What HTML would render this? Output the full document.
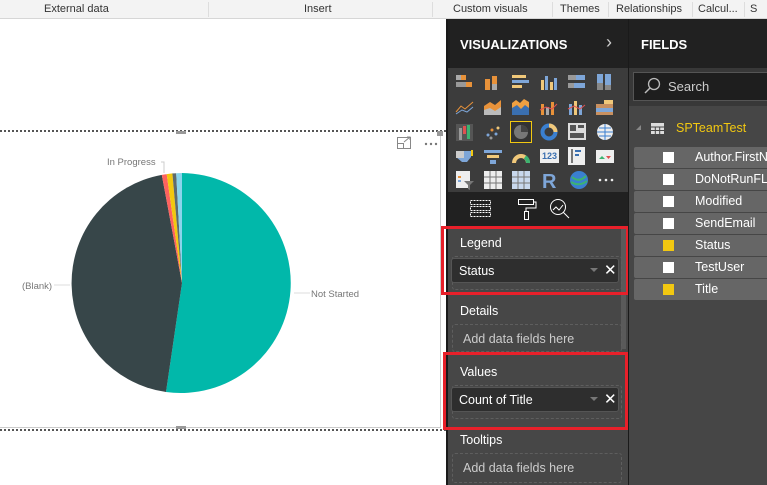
<!DOCTYPE html>
<html><head><meta charset="utf-8"><style>
*{margin:0;padding:0;box-sizing:border-box}
body{width:767px;height:485px;overflow:hidden;position:relative;background:#fff;font-family:"Liberation Sans",sans-serif}
.abs{position:absolute}
.top{left:0;top:0;width:767px;height:19px;background:#f3f3f3;border-bottom:1px solid #d6d6d6;font-size:11px;color:#333}
.top span{position:absolute;top:3px}
.top i{position:absolute;top:2px;width:1px;height:15px;background:#ddd}
.viz{left:446px;top:19px;width:182px;height:466px;background:#474747;border-left:2px solid #1a1a1a}
.fld{left:628px;top:19px;width:139px;height:466px;background:#464646;border-left:1px solid #1a1a1a}
.hdr{color:#fff;font-weight:bold;font-size:13px;letter-spacing:0}
.row{position:absolute;left:5px;width:140px;height:21px;background:#666;border-radius:2px;color:#fff;font-size:12.5px}
.row b{position:absolute;left:29px;top:5px;width:11px;height:11px;background:#fff}
.row b.y{background:#f2c811}
.row span{position:absolute;left:61px;top:3px;font-weight:normal}
.lbl{color:#fff;font-size:12.5px;position:absolute;left:12px}
.well{position:absolute;left:4px;width:170px;height:28px;border:1px dashed #5e5e5e;border-radius:3px;color:#ccc;font-size:12.5px}
.pill{position:absolute;left:3px;width:168px;height:25px;background:#2e2e2e;border:1px solid #555;border-radius:3px;color:#fff;font-size:12.5px}
.red{position:absolute;border:3px solid #e8202a}
</style></head><body>
<div class="abs top">
<span style="left:44px">External data</span><i style="left:208px"></i>
<span style="left:304px">Insert</span><i style="left:432px"></i>
<span style="left:453px">Custom visuals</span><i style="left:552px"></i>
<span style="left:560px">Themes</span><i style="left:608px"></i>
<span style="left:616px">Relationships</span><i style="left:692px"></i>
<span style="left:698px">Calcul...</span><i style="left:744px"></i>
<span style="left:750px">S</span>
</div>

<!-- canvas -->
<div class="abs" style="left:0;top:130px;width:446px;border-top:2px dotted #555"></div>
<div class="abs" style="left:0;top:429px;width:446px;border-top:2px dotted #555"></div>
<div class="abs" style="left:0;top:427px;width:440px;border-top:1px solid #ccc"></div>
<div class="abs" style="left:440px;top:133px;width:1px;height:295px;background:#ccc"></div>
<div class="abs" style="left:176px;top:131px;width:10px;height:3px;background:#999"></div>
<div class="abs" style="left:176px;top:426px;width:10px;height:3px;background:#999"></div>
<div class="abs" style="left:437px;top:131px;width:6px;height:5px;background:#999"></div>
<svg class="abs" style="left:0;top:120px" width="446" height="320">
<rect x="397.5" y="17.5" width="13" height="11" fill="none" stroke="#888"/>
<rect x="397.5" y="23.5" width="6" height="5" fill="none" stroke="#888"/>
<path d="M404 22 L410 17 M407 17 H410 V20" stroke="#888" fill="none"/>
<circle cx="426" cy="24" r="1.2" fill="#777"/><circle cx="431" cy="24" r="1.2" fill="#777"/><circle cx="436" cy="24" r="1.2" fill="#777"/>
<g transform="translate(182,163)">
<path d="M0 0 L0 -110 A110 110 0 1 1 -16 109 Z" fill="#01b8aa"/>
<path d="M0 0 L-16 109 A110 110 0 0 1 -20.2 -108.1 Z" fill="#374649"/>
<path d="M0 0 L-20.2 -108.1 A110 110 0 0 1 -15.3 -108.9 Z" fill="#fd625e"/>
<path d="M0 0 L-15.3 -108.9 A110 110 0 0 1 -9.6 -109.6 Z" fill="#f2c80f"/>
<path d="M0 0 L-9.6 -109.6 A110 110 0 0 1 -5.8 -109.8 Z" fill="#5f6b6d"/>
<path d="M0 0 L-5.8 -109.8 A110 110 0 0 1 0 -110 Z" fill="#8ad4eb"/>
</g>
<path d="M161 42 H164 V53" stroke="#ccc" fill="none"/>
<path d="M54 165 H70" stroke="#ddd"/>
<path d="M294 173 H310" stroke="#ddd"/>
<text x="107" y="45" font-size="9.5" fill="#777" font-family="Liberation Sans">In Progress</text>
<text x="22" y="169" font-size="9.5" fill="#777" font-family="Liberation Sans">(Blank)</text>
<text x="311" y="177" font-size="9.5" fill="#777" font-family="Liberation Sans">Not Started</text>
</svg>

<!-- viz pane -->
<div class="abs viz">
<div class="abs" style="left:0;top:0;width:180px;height:49px;background:#212121"></div>
<div class="abs hdr" style="left:12px;top:18px">VISUALIZATIONS</div>
<div class="abs" style="left:158px;top:13px;color:#ccc;font-size:18px">›</div>
<div class="abs" style="left:0;top:49px;width:180px;height:124px;background:#3c3c3c"></div>
<svg class="abs" style="left:0;top:49px" width="180" height="124">
<g id="r1">
<g transform="translate(8,5)"><rect x="0" y="2" width="10" height="5" fill="#e8923a"/><rect x="0" y="9" width="16" height="5" fill="#999"/><rect x="10" y="9" width="6" height="5" fill="#e8923a"/><rect x="0" y="2" width="5" height="5" fill="#aaa"/></g>
<g transform="translate(36,5)"><rect x="1" y="6" width="5" height="11" fill="#e8923a"/><rect x="8" y="3" width="5" height="14" fill="#e8923a"/><rect x="8" y="11" width="5" height="6" fill="#aaa"/></g>
<g transform="translate(64,5)"><rect x="0" y="2" width="14" height="3" fill="#f0c87a"/><rect x="0" y="7" width="17" height="3" fill="#7ea6d8"/><rect x="0" y="12" width="10" height="3" fill="#f0c87a"/></g>
<g transform="translate(92,5)"><rect x="1" y="7" width="3" height="10" fill="#f0c87a"/><rect x="5" y="3" width="3" height="14" fill="#7ea6d8"/><rect x="10" y="9" width="3" height="8" fill="#f0c87a"/><rect x="14" y="5" width="3" height="12" fill="#7ea6d8"/></g>
<g transform="translate(120,5)"><rect x="0" y="2" width="17" height="5" fill="#7ea6d8"/><rect x="0" y="2" width="8" height="5" fill="#999"/><rect x="0" y="10" width="17" height="5" fill="#7ea6d8"/><rect x="0" y="10" width="6" height="5" fill="#999"/></g>
<g transform="translate(148,5)"><rect x="1" y="1" width="6" height="16" fill="#7ea6d8"/><rect x="9" y="1" width="6" height="16" fill="#7ea6d8"/><rect x="1" y="10" width="6" height="7" fill="#888"/><rect x="9" y="12" width="6" height="5" fill="#888"/></g>
</g>
<g transform="translate(0,25)">
<g transform="translate(8,5)"><path d="M0 14 L5 8 L9 11 L17 4" stroke="#e8923a" fill="none"/><path d="M0 16 L6 12 L11 14 L17 9" stroke="#7ea6d8" fill="none"/></g>
<g transform="translate(36,5)"><path d="M0 17 V8 L6 4 L11 7 L17 2 V17Z" fill="#e8923a"/><path d="M0 17 V12 L6 10 L11 13 L17 9 V17Z" fill="#bbb"/></g>
<g transform="translate(64,5)"><path d="M0 17 V5 L4 2 L8 5 L12 1 L17 4 V17Z" fill="#f0a040"/><path d="M0 17 V10 L5 7 L9 11 L13 7 L17 10 V17Z" fill="#3a6fb0"/></g>
<g transform="translate(92,5)"><rect x="1" y="6" width="3" height="11" fill="#e8923a"/><rect x="6" y="9" width="3" height="8" fill="#aaa"/><rect x="11" y="4" width="3" height="13" fill="#e8923a"/><path d="M0 12 L6 9 L12 11 L17 6" stroke="#e05050" fill="none"/></g>
<g transform="translate(120,5)"><rect x="1" y="6" width="3" height="11" fill="#7ea6d8"/><rect x="6" y="3" width="3" height="14" fill="#f0c87a"/><rect x="11" y="7" width="3" height="10" fill="#7ea6d8"/><path d="M0 11 L6 8 L12 11 L17 7" stroke="#e05050" fill="none"/></g>
<g transform="translate(148,5)"><rect x="0" y="6" width="17" height="11" fill="#c89060"/><rect x="0" y="10" width="17" height="4" fill="#7ea6d8"/><rect x="8" y="2" width="9" height="4" fill="#f0c87a"/></g>
</g>
<g transform="translate(0,50)">
<g transform="translate(8,5)"><rect x="0" y="1" width="17" height="17" fill="#555"/><rect x="3" y="5" width="3" height="12" fill="#999"/><rect x="7" y="3" width="3" height="8" fill="#e05050"/><rect x="11" y="2" width="3" height="14" fill="#3cb371"/></g>
<g transform="translate(36,5)"><circle cx="4" cy="12" r="1.5" fill="#7ea6d8"/><circle cx="8" cy="7" r="1.5" fill="#e8923a"/><circle cx="12" cy="11" r="1.5" fill="#7ea6d8"/><circle cx="14" cy="5" r="1.5" fill="#f0c87a"/><circle cx="7" cy="15" r="1.5" fill="#999"/></g>
<g transform="translate(62,3)"><rect x="0.5" y="0.5" width="21" height="21" fill="#333" stroke="#f2c811"/><circle cx="11" cy="11" r="7" fill="#777"/><path d="M11 11 V4 A7 7 0 0 1 18 11Z" fill="#444"/></g>
<g transform="translate(92,5)"><circle cx="9" cy="9" r="6.5" fill="none" stroke="#3a7fd0" stroke-width="4"/><path d="M9 2.5 A6.5 6.5 0 0 1 15.5 9" fill="none" stroke="#f0c87a" stroke-width="4"/></g>
<g transform="translate(120,5)"><rect x="0" y="0" width="18" height="17" fill="#ddd"/><rect x="2" y="2" width="6" height="6" fill="#555"/><rect x="10" y="2" width="6" height="3" fill="#555"/><rect x="2" y="10" width="14" height="5" fill="#555"/></g>
<g transform="translate(148,5)"><circle cx="9" cy="9" r="8" fill="#eee"/><path d="M1 9 H17 M9 1 V17 M3 5 H15 M3 13 H15" stroke="#3a7fd0"/></g>
</g>
<g transform="translate(0,75)">
<g transform="translate(8,5)"><path d="M0 3 H15 V9 L11 14 H6 L0 9Z" fill="#7ea6d8"/><path d="M0 3 H8 V10 H0Z" fill="#ccc"/><rect x="15" y="2" width="2" height="6" fill="#f2c811"/></g>
<g transform="translate(36,5)"><rect x="0" y="2" width="18" height="3" fill="#7ea6d8"/><rect x="3" y="7" width="12" height="3" fill="#f0c87a"/><rect x="6" y="12" width="6" height="4" fill="#7ea6d8"/></g>
<g transform="translate(64,5)"><path d="M2 15 A7 7 0 0 1 16 15" stroke="#f0c87a" stroke-width="4" fill="none"/><path d="M13 9 A7 7 0 0 1 16 15" stroke="#3cb371" stroke-width="4" fill="none"/></g>
<g transform="translate(92,4)"><rect x="0" y="2" width="19" height="14" fill="#eee"/><text x="2" y="12" font-size="9" fill="#3a6fb0" font-family="Liberation Sans" font-weight="bold">123</text></g>
<g transform="translate(120,4)"><rect x="0" y="0" width="17" height="18" fill="#eee"/><rect x="3" y="2" width="2" height="14" fill="#777"/><rect x="7" y="3" width="6" height="2" fill="#3a6fb0"/><rect x="7" y="7" width="4" height="2" fill="#3a6fb0"/></g>
<g transform="translate(148,5)"><rect x="0" y="2" width="18" height="13" fill="#eee"/><path d="M3 11 L6 8 L9 11Z" fill="#3cb371"/><path d="M10 8 H15 L12.5 11Z" fill="#e05050"/></g>
</g>
<g transform="translate(0,99)">
<g transform="translate(8,4)"><rect x="0" y="0" width="14" height="17" fill="#eee"/><rect x="2" y="5" width="3" height="2" fill="#e8923a"/><rect x="2" y="9" width="3" height="2" fill="#7ea6d8"/><path d="M8 10 H18 L14 14 V19 L12 18 V14Z" fill="#777"/></g>
<g transform="translate(36,4)"><rect x="0" y="0" width="18" height="18" fill="#eee"/><path d="M6 0 V18 M12 0 V18 M0 6 H18 M0 12 H18" stroke="#777"/></g>
<g transform="translate(64,4)"><rect x="0" y="0" width="18" height="18" fill="#c8d8ee"/><path d="M6 0 V18 M12 0 V18 M0 6 H18 M0 12 H18" stroke="#777"/></g>
<text x="94" y="21" font-size="20" font-weight="bold" fill="#7ea6d8" font-family="Liberation Sans">R</text>
<g transform="translate(122,4)"><circle cx="9" cy="9" r="9" fill="#3a7fd0"/><path d="M2 6 Q9 12 16 5 M1 11 Q9 16 17 10" stroke="#3cb371" stroke-width="2" fill="none"/></g>
<g transform="translate(150,12)"><circle cx="2" cy="1" r="1.3" fill="#eee"/><circle cx="8" cy="1" r="1.3" fill="#eee"/><circle cx="14" cy="1" r="1.3" fill="#eee"/></g>
</g>
</svg>
<div class="abs" style="left:0;top:173px;width:180px;height:35px;background:#212121"></div>
<svg class="abs" style="left:0;top:173px" width="180" height="35">
<rect x="22.5" y="8.5" width="20" height="4" fill="none" stroke="#fff" stroke-dasharray="2 1"/>
<rect x="22.5" y="14.5" width="20" height="4" fill="none" stroke="#fff" stroke-dasharray="2 1"/>
<rect x="22.5" y="20.5" width="20" height="4" fill="none" stroke="#fff" stroke-dasharray="2 1"/>
<rect x="70.5" y="7.5" width="15" height="5" fill="none" stroke="#fff"/>
<path d="M85 10 H88 V16 H78 V19" stroke="#fff" fill="none"/>
<rect x="76.5" y="19.5" width="4" height="8" fill="none" stroke="#fff"/>
<circle cx="110" cy="15" r="7.5" fill="none" stroke="#fff"/>
<path d="M105 18 L108 15 L111 18 L115 13 M115 20 L121 26" stroke="#fff" fill="none"/>
</svg>
<div class="abs" style="left:173px;top:210px;width:5px;height:120px;background:#5a5a5a"></div>
<div class="lbl" style="top:217px">Legend</div>
<div class="well" style="top:237px;height:34px"></div>
<div class="pill" style="top:239px"><span class="abs" style="left:7px;top:5px">Status</span><span class="abs" style="left:138px;top:9px;border-left:4px solid transparent;border-right:4px solid transparent;border-top:4px solid #777"></span><span class="abs" style="left:152px;top:2px;font-size:15px">✕</span></div>
<div class="lbl" style="top:285px">Details</div>
<div class="well" style="top:305px"><span class="abs" style="left:10px;top:7px">Add data fields here</span></div>
<div class="lbl" style="top:346px">Values</div>
<div class="well" style="top:366px;height:34px"></div>
<div class="pill" style="top:368px"><span class="abs" style="left:7px;top:5px">Count of Title</span><span class="abs" style="left:138px;top:9px;border-left:4px solid transparent;border-right:4px solid transparent;border-top:4px solid #777"></span><span class="abs" style="left:152px;top:2px;font-size:15px">✕</span></div>
<div class="lbl" style="top:414px">Tooltips</div>
<div class="well" style="top:434px;height:30px"><span class="abs" style="left:10px;top:7px">Add data fields here</span></div>
</div>
<div class="red" style="left:441px;top:226px;width:188px;height:69px"></div>
<div class="red" style="left:443px;top:352px;width:185px;height:78px"></div>

<!-- fields pane -->
<div class="abs fld">
<div class="abs" style="left:0;top:0;width:139px;height:49px;background:#212121"></div>
<div class="abs hdr" style="left:12px;top:18px">FIELDS</div>
<div class="abs" style="left:0;top:49px;width:139px;height:38px;background:#383838"></div>
<div class="abs" style="left:4px;top:53px;width:140px;height:29px;background:#1e1e1e;border:1px solid #555"></div>
<svg class="abs" style="left:14px;top:58px" width="20" height="20"><circle cx="11" cy="7" r="5.5" fill="none" stroke="#bbb" stroke-width="1.3"/><path d="M7 11 L2 16" stroke="#bbb" stroke-width="1.5"/></svg>
<div class="abs" style="left:39px;top:60px;color:#ccc;font-size:13px">Search</div>
<div class="abs" style="left:7px;top:106px;border-left:5px solid transparent;border-bottom:5px solid #888"></div>
<svg class="abs" style="left:22px;top:104px" width="14" height="12"><rect width="13" height="11" fill="#ddd"/><path d="M0 4 H13 M0 7.5 H13 M4.3 4 V11 M8.7 4 V11" stroke="#464646"/></svg>
<div class="abs" style="left:47px;top:102px;color:#f2c811;font-size:12.5px">SPTeamTest</div>
<div class="row" style="top:128px"><b></b><span>Author.FirstName</span></div>
<div class="row" style="top:150px"><b></b><span>DoNotRunFLOW</span></div>
<div class="row" style="top:172px"><b></b><span>Modified</span></div>
<div class="row" style="top:194px"><b></b><span>SendEmail</span></div>
<div class="row" style="top:216px"><b class="y"></b><span>Status</span></div>
<div class="row" style="top:238px"><b></b><span>TestUser</span></div>
<div class="row" style="top:260px"><b class="y"></b><span>Title</span></div>
</div>
</body></html>
